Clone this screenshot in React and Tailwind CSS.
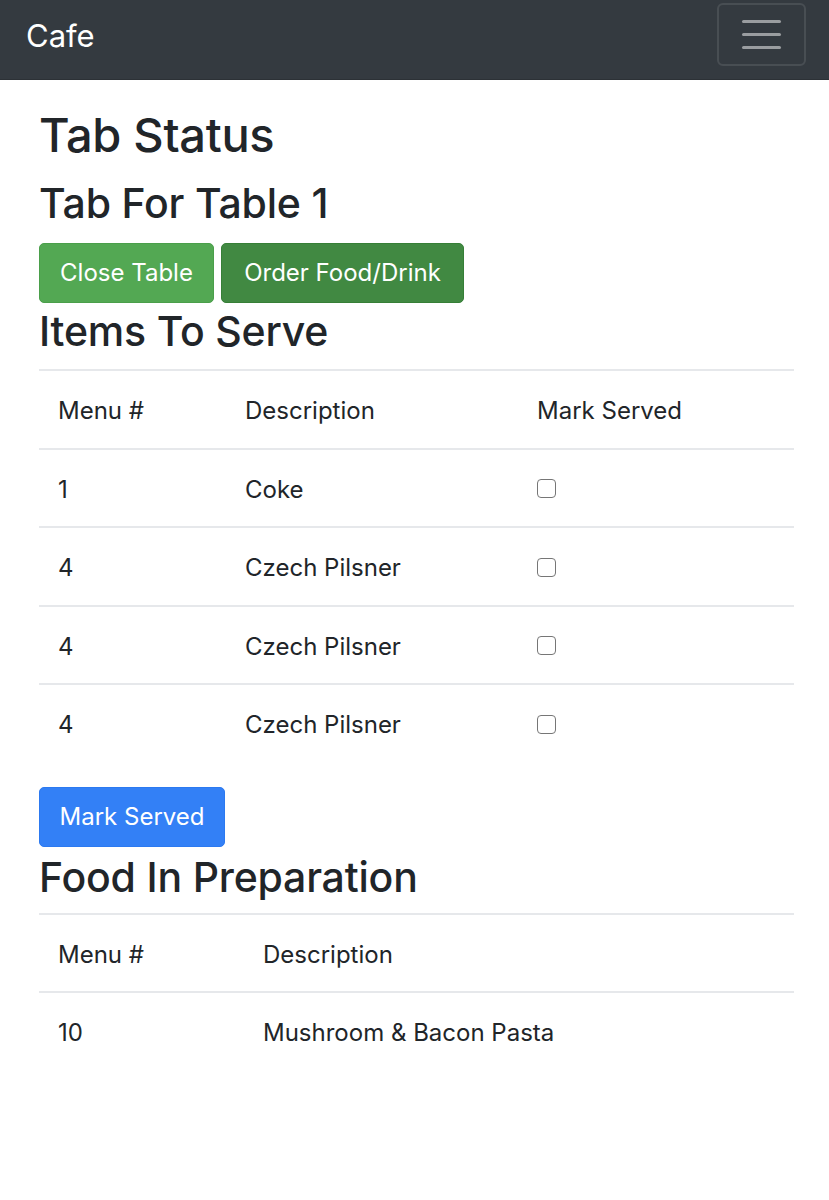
import React, { useState } from "react";

const items = [
  { id: 1, menu: 1, desc: "Coke" },
  { id: 2, menu: 4, desc: "Czech Pilsner" },
  { id: 3, menu: 4, desc: "Czech Pilsner" },
  { id: 4, menu: 4, desc: "Czech Pilsner" },
];

const cooking = [{ id: 1, menu: 10, desc: "Mushroom & Bacon Pasta" }];

function Navbar() {
  return (
    <nav className="h-[80px] bg-[#343a40] border-b border-[#2c3136] flex items-center justify-between pl-[26px] pr-[23px]">
      <a href="#" className="text-white text-[31px] leading-none -mt-[8px]">
        Cafe
      </a>
      <button className="w-[89px] h-[63px] -mt-[10px] rounded-[6px] border-2 border-white/10 flex flex-col items-center justify-center gap-[10px]">
        <span className="block w-[39px] h-[3px] rounded-full bg-white/50" />
        <span className="block w-[39px] h-[3px] rounded-full bg-white/50" />
        <span className="block w-[39px] h-[3px] rounded-full bg-white/50" />
      </button>
    </nav>
  );
}

function Heading({ children, className = "" }) {
  return (
    <h3 className={`text-[41px] leading-[51px] font-medium tracking-[-0.2px] text-[#212529] ${className}`}>
      {children}
    </h3>
  );
}

function Cell({ children, head, className = "" }) {
  const Tag = head ? "th" : "td";
  return (
    <Tag className={`text-left font-normal border-t-2 border-[#e6e8eb] pl-[19px] pt-[22px] pb-[18.5px] leading-[36px] align-middle ${className}`}>
      {children}
    </Tag>
  );
}

export default function App() {
  const [served, setServed] = useState({});

  return (
    <div className="min-h-[1200px] bg-white text-[#212529] text-[24px] font-['Inter','Noto_Sans',sans-serif]">
      <Navbar />

      <main className="pl-[39px] pr-[35px] pt-[26px]">
        <h1 className="text-[47px] leading-[58px] font-medium tracking-[-0.3px] mb-[14px]">Tab Status</h1>
        <Heading className="mb-[14px]">Tab For Table 1</Heading>

        <div className="flex gap-[7px]">
          <button className="w-[175px] h-[60px] rounded-[5px] bg-[#53a853] border border-[#4a9f4a] text-white text-[24px]">
            Close Table
          </button>
          <button className="w-[243px] h-[60px] rounded-[5px] bg-[#418942] border border-[#367f37] text-white text-[24px]">
            Order Food/Drink
          </button>
        </div>

        <Heading className="mt-[3px] mb-[12px]">Items To Serve</Heading>

        <table className="w-full border-collapse mb-[25px]">
          <thead>
            <tr>
              <Cell head className="w-[187px]">Menu #</Cell>
              <Cell head className="w-[292px]">Description</Cell>
              <Cell head>Mark Served</Cell>
            </tr>
          </thead>
          <tbody>
            {items.map((it) => (
              <tr key={it.id}>
                <Cell>{it.menu}</Cell>
                <Cell>{it.desc}</Cell>
                <Cell>
                  <input
                    type="checkbox"
                    checked={!!served[it.id]}
                    onChange={() => setServed({ ...served, [it.id]: !served[it.id] })}
                    className="appearance-none block w-[19px] h-[19px] -mt-[2px] border-[1.5px] border-[#767676] rounded-[4px] bg-white checked:bg-[#0075ff] checked:border-[#0075ff]"
                  />
                </Cell>
              </tr>
            ))}
          </tbody>
        </table>

        <button className="w-[186px] h-[60px] rounded-[5px] bg-[#3380f6] border border-[#2c79f0] text-white text-[24px]">
          Mark Served
        </button>

        <Heading className="mt-[5px] mb-[10px]">Food In Preparation</Heading>

        <table className="w-full border-collapse">
          <thead>
            <tr>
              <Cell head className="w-[205px]">Menu #</Cell>
              <Cell head>Description</Cell>
            </tr>
          </thead>
          <tbody>
            {cooking.map((it) => (
              <tr key={it.id}>
                <Cell>{it.menu}</Cell>
                <Cell>{it.desc}</Cell>
              </tr>
            ))}
          </tbody>
        </table>
      </main>
    </div>
  );
}
